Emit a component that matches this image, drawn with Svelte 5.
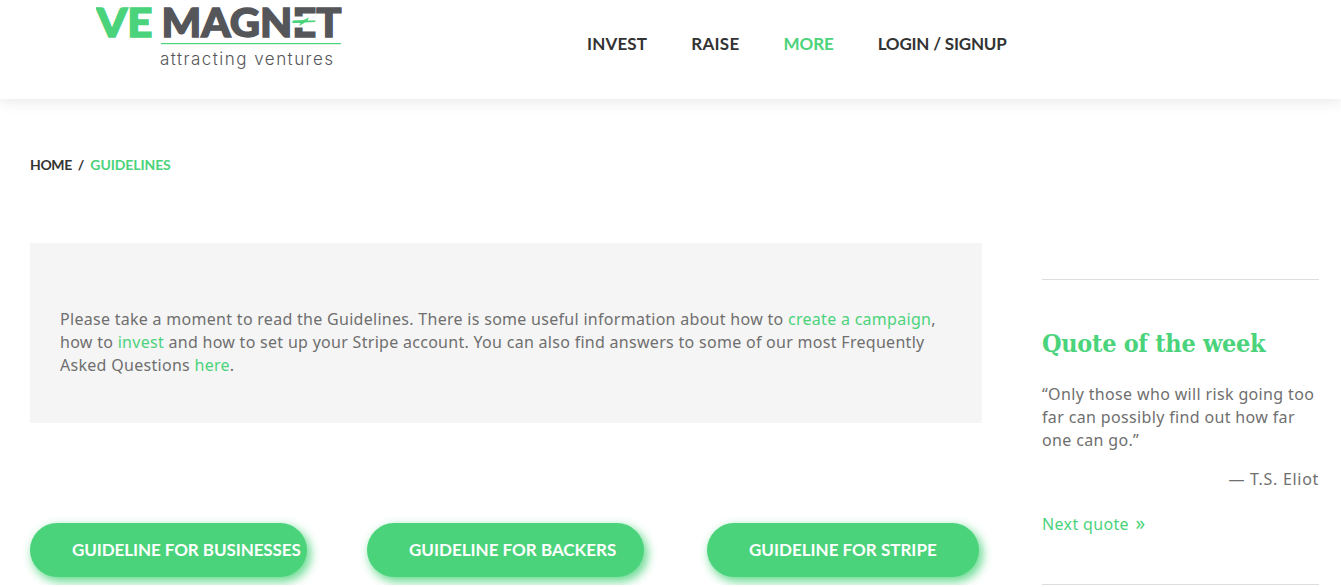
<script>
  const nav = [
    { label: 'INVEST' },
    { label: 'RAISE' },
    { label: 'MORE', active: true },
    { label: 'LOGIN / SIGNUP' }
  ];
  const buttons = [
    { label: 'GUIDELINE FOR BUSINESSES', cls: 'b1' },
    { label: 'GUIDELINE FOR BACKERS', cls: 'b2' },
    { label: 'GUIDELINE FOR STRIPE', cls: 'b3' }
  ];
</script>

<header class="header">
  <a class="logo" href="#top" aria-label="VE Magnet">
    <svg width="246" height="70" viewBox="0 0 246 70">
      <text x="0.5" y="36.500" class="lt green" textLength="56" lengthAdjust="spacingAndGlyphs">VE</text>
      <text x="65.5" y="36.500" class="lt gray" textLength="180" lengthAdjust="spacingAndGlyphs">MAGNET</text>
      <rect x="197" y="16.5" width="23" height="11" fill="#fff" />
      <path d="M197 20.500l10.500-.5 5.500-2.500-1.500 3 8.500 0-1 1.500-10 .5-6 3.500 1.500-3-8.500 0z" fill="#4bd37b" />
      <rect x="65" y="43" width="180" height="1.2" fill="#4bd37b" />
      <text x="64" y="65" class="tag" textLength="173" lengthAdjust="spacing">attracting ventures</text>
    </svg>
  </a>
  <nav class="nav">
    {#each nav as item}
      <a href="#top" class:active={item.active}>{item.label}</a>
    {/each}
  </nav>
</header>

<div class="crumbs">
  <a href="#top" class="home">HOME</a><span class="sep">/</span><a href="#top" class="cur">GUIDELINES</a>
</div>

<main class="layout">
  <div class="col">
    <div class="intro">
      <p>
        Please take a moment to read the Guidelines. There is some useful information about how to
        <a href="#top">create a campaign</a>, how to <a href="#top">invest</a> and how to set up your
        Stripe account. You can also find answers to some of our most Frequently Asked Questions
        <a href="#top">here</a>.
      </p>
    </div>
    <div class="buttons">
      {#each buttons as b}
        <a href="#top" class="btn {b.cls}">{b.label}</a>
      {/each}
    </div>
  </div>
  <aside class="side">
    <h2>Quote of the week</h2>
    <p class="quote">“Only those who will risk going too far can possibly find out how far one can go.”</p>
    <p class="author">— T.S. Eliot</p>
    <a class="next" href="#top">Next quote <span class="arrows">»</span></a>
  </aside>
</main>

<style>
  :global(body) {
    margin: 0;
    background: #fff;
    overflow: hidden;
    font-family: "Noto Sans", sans-serif;
  }
  a { text-decoration: none; color: inherit; }
  .header {
    height: 99px;
    display: flex;
    background: #fff;
    box-shadow: 0 2px 14px rgba(0, 0, 0, 0.1);
  }
  .logo { display: block; margin-left: 96px; height: 70px; }
  .lt {
    font-family: "Lato", sans-serif;
    font-weight: 900;
    font-size: 39px;
    stroke-width: 1.4px;
  }
  .green { fill: #4bd37b; stroke: #4bd37b; }
  .gray { fill: #55565a; stroke: #55565a; }
  .tag { font-family: "Inter", sans-serif; font-weight: 300; font-size: 17px; fill: #55565a; }
  .nav {
    display: flex;
    gap: 44px;
    margin-left: 245px;
    padding-top: 33px;
    font-family: "Lato", sans-serif;
    font-weight: 700;
    font-size: 17px;
    line-height: 22px;
    letter-spacing: 0.15px;
    color: #333;
  }
  .nav a:nth-child(2) { letter-spacing: 0.3px; }
  .nav a:nth-child(4) { letter-spacing: -0.2px; }
  .nav .active { color: #4bd37b; letter-spacing: -0.1px; }
  .crumbs {
    margin: 56px 0 0 30px;
    font-family: "Lato", sans-serif;
    font-weight: 700;
    font-size: 14px;
    line-height: 20px;
    color: #333;
  }
  .home { letter-spacing: -0.4px; }
  .sep { margin: 0 6px; }
  .cur { color: #4bd37b; letter-spacing: -0.1px; }
  .layout {
    display: grid;
    grid-template-columns: 952px 277px;
    column-gap: 60px;
    margin: 68px 0 0 30px;
  }
  .intro {
    height: 180px;
    box-sizing: border-box;
    padding: 65px 30px 0;
    background: #f5f5f5;
    font-size: 16px;
    line-height: 23px;
    letter-spacing: 0.29px;
    color: #6f6f6f;
  }
  .intro p { margin: 0; }
  .intro a, .next { color: #4bd37b; }
  .buttons { display: flex; margin-top: 100px; }
  .btn {
    height: 54px;
    border-radius: 27px;
    box-sizing: border-box;
    padding-left: 42px;
    background: #4bd37b;
    color: #fff;
    font-family: "Lato", sans-serif;
    font-weight: 700;
    font-size: 17px;
    line-height: 54px;
    white-space: nowrap;
    box-shadow: 3px 4px 10px 1px rgba(75, 211, 123, 0.8);
  }
  .b1 { width: 277px; letter-spacing: -0.08px; }
  .b2 { width: 277px; margin-left: 60px; }
  .b3 { width: 272px; margin-left: 63px; }
  .side {
    margin-top: 36px;
    height: 306px;
    box-sizing: border-box;
    border-top: 1px solid #ddd;
    border-bottom: 1px solid #ddd;
    padding-top: 46px;
    font-size: 16px;
    line-height: 23px;
    letter-spacing: 0.35px;
    color: #6f6f6f;
  }
  h2 {
    margin: 0;
    font-family: "DejaVu Serif", serif;
    font-stretch: condensed;
    font-weight: 700;
    font-size: 25px;
    line-height: 36px;
    letter-spacing: -0.3px;
    color: #4bd37b;
  }
  .quote { margin: 21px 0 0; }
  .author { margin: 16px 0 0; text-align: right; letter-spacing: 0.7px; }
  .next { display: block; margin-top: 22px; }
  .arrows { margin-left: 2px; font-size: 19px; line-height: 20px; }
</style>
